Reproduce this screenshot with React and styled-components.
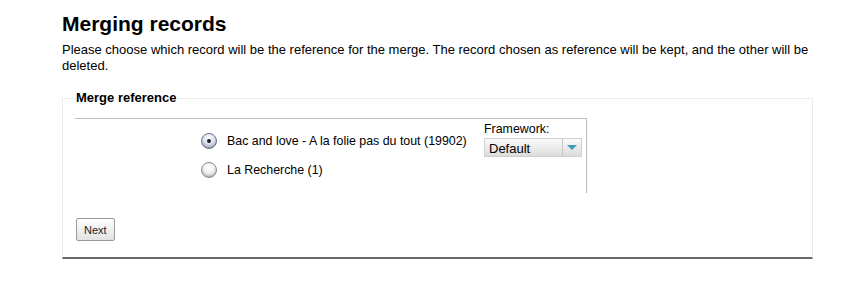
import styled, { createGlobalStyle } from "styled-components";

const Global = createGlobalStyle`
    body {
        margin: 0;
        background: #fff;
        font-family: "Liberation Sans", Arial, sans-serif;
        color: #000;
    }
`
const Page = styled.div`
    width: 751px;
    margin-left: 62px;
    padding-top: 12px;
`
const Title = styled.h1`
    font-size: 21px;
    font-weight: bold;
    line-height: 24px;
    margin: 0 0 6px;
`
const Intro = styled.p`
    font-size: 13px;
    line-height: 16px;
    margin: 0 0 16px;
`
const Fieldset = styled.fieldset`
    margin: 0;
    padding: 4px 12px 16px;
    border: 1px solid #ececec;
    border-bottom: 2px solid #6a6a6a;
    min-inline-size: 0;
`
const Legend = styled.legend`
    font-size: 13px;
    font-weight: bold;
    padding: 0 1px;
    margin-left: 0;
    line-height: 16px;
`
const Choices = styled.div`
    display: grid;
    grid-template-columns: 1fr auto;
    width: 511px;
    height: 74px;
    border-top: 1px solid #bdbdbd;
    border-right: 1px solid #bdbdbd;
    margin-top: 8px;
`
const RadioList = styled.div`
    display: flex;
    flex-direction: column;
    gap: 9px;
    padding: 12px 0 0 126px;
`
const RadioRow = styled.label`
    display: flex;
    align-items: center;
    gap: 10px;
    height: 20px;
    font-size: 12.4px;
`
const Radio = styled.span`
    position: relative;
    width: 14px;
    height: 14px;
    border-radius: 50%;
    border: 1px solid ${p => p.checked ? "#6a7088" : "#8c8c8c"};
    background: ${p => p.checked
        ? "radial-gradient(circle at 50% 30%, #ffffff 0%, #dde1ee 45%, #8f98b6 100%)"
        : "radial-gradient(circle at 50% 30%, #ffffff 0%, #f0f0f0 45%, #b0b0b0 100%)"};
    box-shadow: inset 0 -1px 1px rgba(0,0,0,0.15);

    &::after {
        content: "";
        display: ${p => p.checked ? "block" : "none"};
        position: absolute;
        left: 5px;
        top: 5px;
        width: 4px;
        height: 4px;
        border-radius: 50%;
        background: #1c1f2a;
    }
`
const Framework = styled.div`
    padding: 3px 4px 0 0;
    font-size: 12.4px;
`
const FrameworkLabel = styled.div`
    line-height: 14px;
    margin-bottom: 2px;
`
const Select = styled.div`
    display: flex;
    width: 98px;
    height: 19px;
    border: 1px solid #cfcfcf;
    background: linear-gradient(#fafafa, #dcdcdc);
    font-size: 13px;
    box-sizing: border-box;
`
const SelectValue = styled.span`
    flex: 1;
    padding: 3px 0 0 4px;
    line-height: 14px;
`
const SelectArrow = styled.span`
    width: 18px;
    border-left: 1px solid #c4c4c4;
    display: flex;
    align-items: center;
    justify-content: center;

    &::before {
        content: "";
        border-left: 5px solid transparent;
        border-right: 5px solid transparent;
        border-top: 5px solid #3f9cb4;
    }
`
const Button = styled.button`
    display: block;
    margin-top: 25px;
    margin-left: 1px;
    height: 23px;
    padding: 0 7px;
    font-family: "Liberation Sans", Arial, sans-serif;
    font-size: 11px;
    color: #222;
    border: 1px solid #9a9a9a;
    border-radius: 2px;
    background: linear-gradient(#fdfdfd, #e2e2e2);
`

const records = [
    { title: "Bac and love - A la folie pas du tout (19902)", checked: true },
    { title: "La Recherche (1)", checked: false },
]

const App = () => {
    return (
        <Page>
            <Global />
            <Title>Merging records</Title>
            <Intro>
                Please choose which record will be the reference for the merge. The record chosen as reference will be kept, and the other will be deleted.
            </Intro>
            <Fieldset>
                <Legend>Merge reference</Legend>
                <Choices>
                    <RadioList>
                        {records.map((record, index) =>
                            <RadioRow key={index}>
                                <Radio checked={record.checked} />
                                {record.title}
                            </RadioRow>
                        )}
                    </RadioList>
                    <Framework>
                        <FrameworkLabel>Framework:</FrameworkLabel>
                        <Select>
                            <SelectValue>Default</SelectValue>
                            <SelectArrow />
                        </Select>
                    </Framework>
                </Choices>
                <Button>Next</Button>
            </Fieldset>
        </Page>
    )
}
export default App
